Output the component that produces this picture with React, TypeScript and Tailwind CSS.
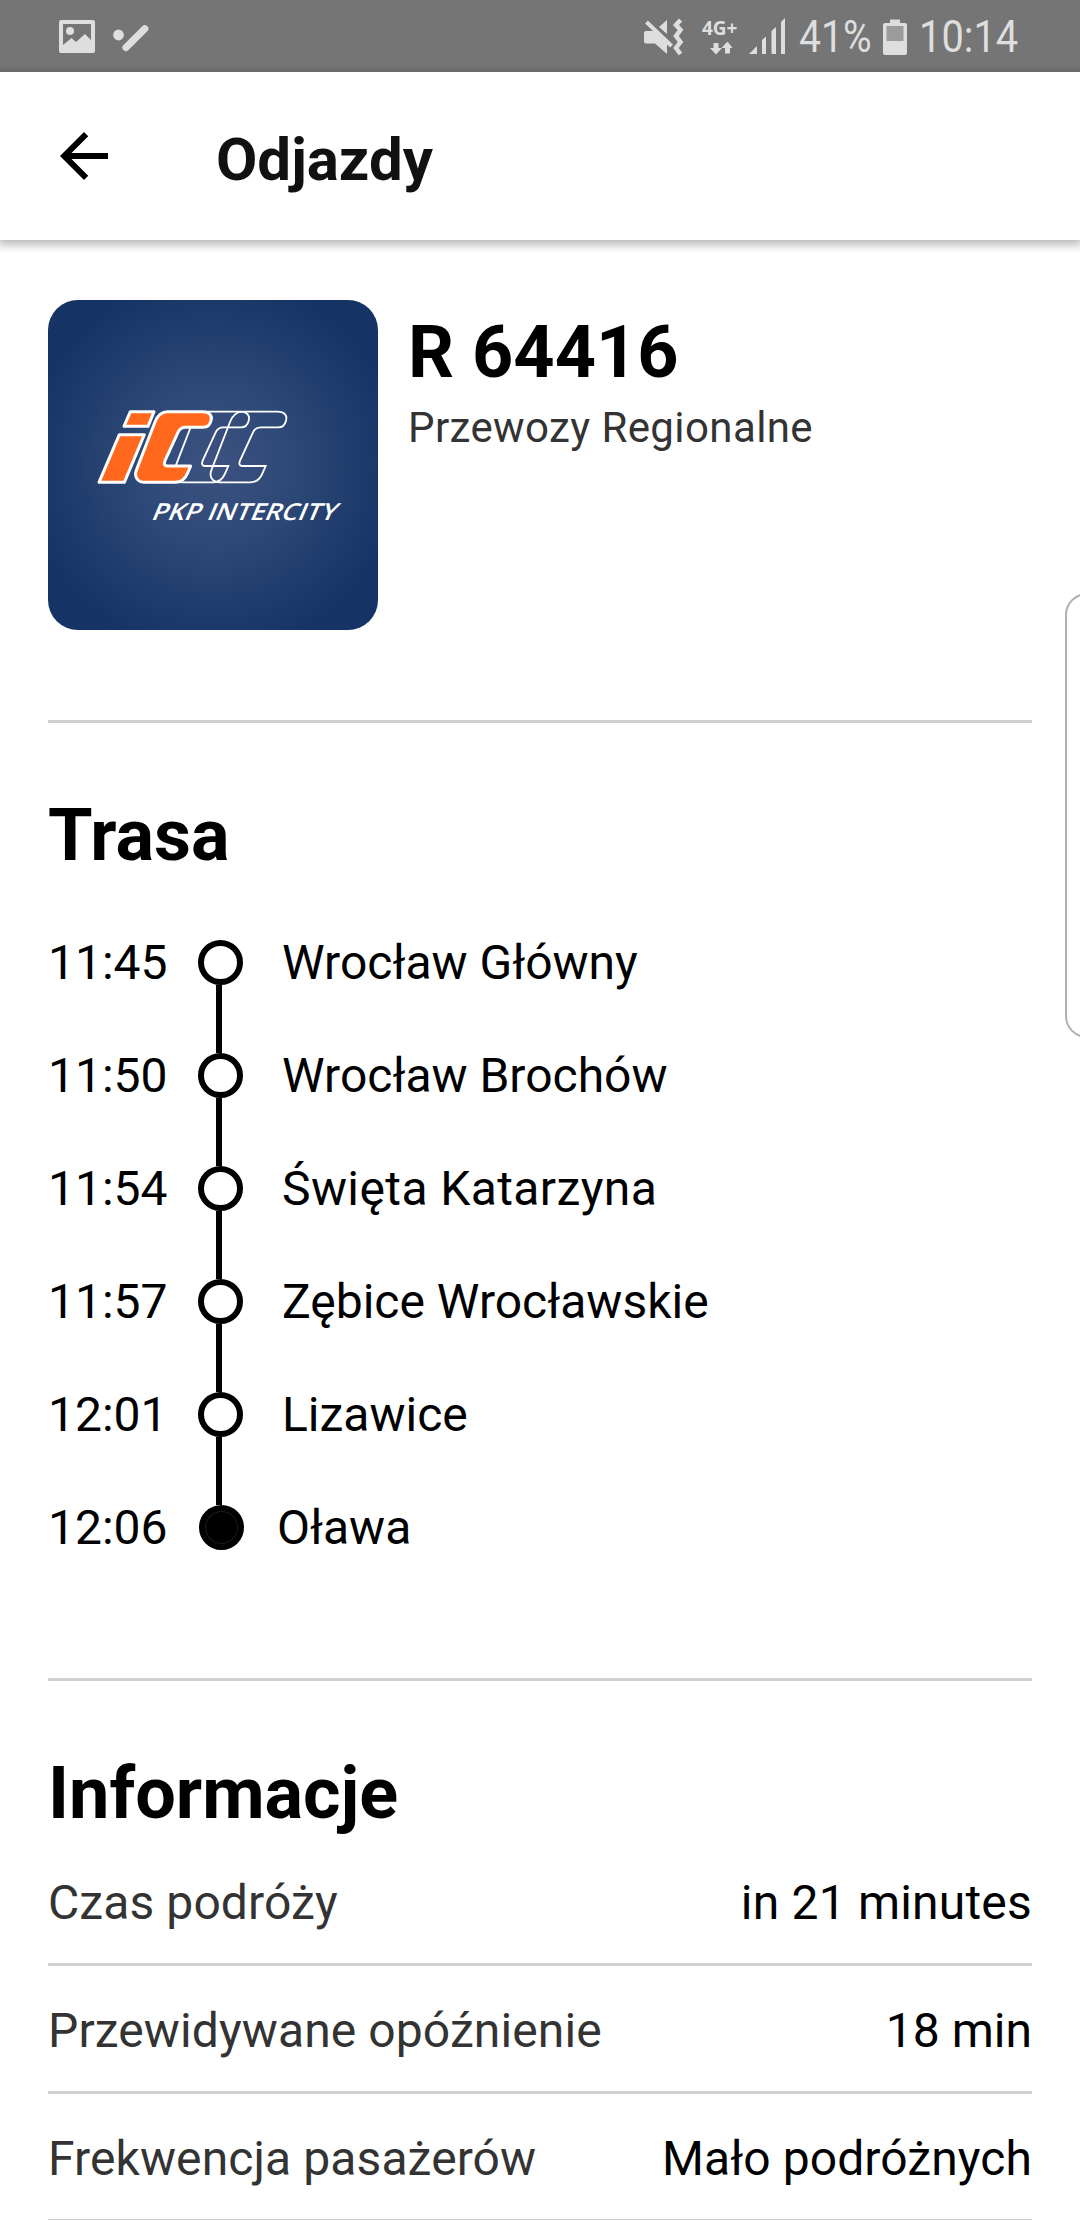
import React from "react";

const stops = [
  { time: "11:45", name: "Wrocław Główny", tracking: "" },
  { time: "11:50", name: "Wrocław Brochów", tracking: "" },
  { time: "11:54", name: "Święta Katarzyna", tracking: "tracking-[0.4px]" },
  { time: "11:57", name: "Zębice Wrocławskie", tracking: "" },
  { time: "12:01", name: "Lizawice", tracking: "" },
  { time: "12:06", name: "Oława", tracking: "" },
];

const info = [
  { label: "Czas podróży", value: "in 21 minutes", tracking: "tracking-[0.2px]" },
  { label: "Przewidywane opóźnienie", value: "18 min", tracking: "" },
  { label: "Frekwencja pasażerów", value: "Mało podróżnych", tracking: "tracking-[0.08px]" },
];

const C_SHAPE =
  "M383 365H488C507 365 518 376 513 392Q508 412 490 412H437Q421 412 414 427L375 512Q369 528 382 528H452L442 551Q431 577 406 577H316C291 577 281 559 290 538L345 396Q357 365 383 365Z";

function StatusBar() {
  return (
    <div className="flex h-[72px] items-start bg-[#757575] text-[#dedede]">
      <svg className="ml-[58px] mt-[18px] h-9 w-[94px]" viewBox="58 18 94 36" fill="currentColor">
        <path
          fillRule="evenodd"
          d="M61 20H93a2 2 0 0 1 2 2V51a2 2 0 0 1-2 2H61a2 2 0 0 1-2-2V22a2 2 0 0 1 2-2ZM63 24V45L71.500 38L76 42L85 34L91 40V24Z"
        />
        <circle cx="70" cy="31" r="4" />
        <circle cx="118.500" cy="35" r="5.400" />
        <path d="M126 47.500L144.800 28.700" stroke="currentColor" strokeWidth="7.200" strokeLinecap="round" />
      </svg>
      <svg className="ml-[490px] mt-[18px] h-[38px] w-[42px]" viewBox="642 18 42 38" fill="currentColor">
        <path d="M644 33Q644 31 646 31H656L667 42V54L655 43.500H646Q644 43.500 644 41.500Z" />
        <path d="M659 27L667 20V34Z" />
        <path d="M646.500 22L671.500 46" stroke="currentColor" strokeWidth="4" />
        <path
          d="M680.500 20L676 25L680.500 30L676 36L680.500 42L676 48L680.500 54"
          fill="none"
          stroke="currentColor"
          strokeWidth="4.500"
        />
      </svg>
      <div className="ml-[18px] mt-[18px] w-[38px]">
        <div className="whitespace-nowrap font-['Open_Sans'] text-[19px] font-bold leading-5">4G+</div>
        <svg className="ml-2 mt-[4px] h-[13px] w-[22px]" viewBox="709 42 22 13" fill="currentColor">
          <path d="M712.500 43h5v5h3.500l-6 6.500l-6-6.500h3.500Z M724 53.500h5V48h2.500l-5-6.500l-6 6.500h3.500Z" />
        </svg>
      </div>
      <svg className="ml-[8px] mt-[17px] h-[38px] w-[38px]" viewBox="748 17 38 38" fill="currentColor">
        <path d="M749 54L757 46V54Z M762 40L766 36.500V54H762Z M771.500 31L776 27V54H771.500Z M781 22L785 18V54H781Z" />
      </svg>
      <div className="ml-[13px] mt-[10px] w-[83px]">
        <div className="origin-left scale-x-[0.87] whitespace-nowrap text-[45px] leading-[54px]">41%</div>
      </div>
      <svg className="mt-[18px] h-[38px] w-[26px]" viewBox="882 18 26 38" fill="currentColor">
        <path d="M890 19.500H900V23H905a2 2 0 0 1 2 2V53a2 2 0 0 1-2 2H885a2 2 0 0 1-2-2V25a2 2 0 0 1 2-2H890Z" />
        <path d="M886.500 26H903.500V41H886.500Z" fill="#9b9b9b" />
      </svg>
      <div className="ml-[11px] mt-[10px]">
        <div className="origin-left scale-x-[0.885] whitespace-nowrap text-[45px] leading-[54px]">10:14</div>
      </div>
    </div>
  );
}

function CarrierLogo() {
  return (
    <div className="h-[330px] w-[330px] shrink-0 overflow-hidden rounded-[30px]">
      <svg viewBox="24 30 990 990" className="h-full w-full">
        <defs>
          <radialGradient id="glow" cx="0.500" cy="0.500" r="0.580">
            <stop offset="0" stopColor="#3d5281" />
            <stop offset="0.400" stopColor="#2e4977" />
            <stop offset="0.750" stopColor="#1e3c6c" />
            <stop offset="1" stopColor="#153465" />
          </radialGradient>
        </defs>
        <rect x="24" y="30" width="990" height="990" fill="url(#glow)" />
        <g fill="none" stroke="#fff" strokeWidth="5.500">
          <path d={C_SHAPE} transform="translate(225 0)" />
          <path d={C_SHAPE} transform="translate(113 0)" />
        </g>
        <g fill="#ff681d" stroke="#fff" strokeWidth="9" strokeLinejoin="round">
          <path d={C_SHAPE} />
          <path d="M271 365H342L324 409H252Z" />
          <path d="M238 434H313L253 577H177Z" />
        </g>
        <text
          transform="translate(331 689) skewX(-23)"
          textLength="552"
          lengthAdjust="spacingAndGlyphs"
          fill="#fff"
          className="font-['Open_Sans'] text-[70px] font-semibold"
        >
          PKP INTERCITY
        </text>
      </svg>
    </div>
  );
}

function Divider() {
  return <div className="h-[3px] bg-[#d0d0d0]" />;
}

export default function App() {
  return (
    <div className="relative h-[2220px] w-[1080px] overflow-hidden bg-white font-['Roboto',sans-serif] text-black">
      <StatusBar />
      <header className="flex h-[168px] items-center bg-white shadow-[0_3px_9px_2px_rgba(0,0,0,0.28)]">
        <svg className="ml-12 h-[72px] w-[72px]" viewBox="0 0 24 24">
          <path d="M20 11H7.830l5.590-5.590L12 4l-8 8 8 8 1.410-1.410L7.830 13H20v-2z" />
        </svg>
        <h1 className="ml-24 mt-[7px] text-[60px] font-bold leading-[72px] text-[#111]">Odjazdy</h1>
      </header>
      <main className="px-12 pt-[60px]">
        <section className="flex h-[330px]">
          <CarrierLogo />
          <div className="ml-[30px] pt-[11px]">
            <h2 className="text-[72px] font-bold leading-[84px]">R 64416</h2>
            <p className="mt-[8px] text-[42px] leading-[50px] tracking-[0.4px] text-[#333]">Przewozy Regionalne</p>
          </div>
        </section>
        <div className="mt-[90px]">
          <Divider />
        </div>
        <h2 className="mt-[71px] text-[72px] font-bold leading-[84px]">Trasa</h2>
        <ul className="mt-[28px] text-[48px]">
          {stops.map((s, i) => {
            const last = i === stops.length - 1;
            return (
              <li key={s.time} className="flex h-[113px] items-center">
                <span className="w-[150px]">{s.time}</span>
                <span className="flex h-full w-[45px] flex-col items-center">
                  <span className={`mr-[3px] w-[6px] flex-1 ${i === 0 ? "" : "bg-black"}`} />
                  <span
                    className={`h-[45px] w-[45px] shrink-0 rounded-full border-[6px] border-black ${
                      last ? "translate-x-px bg-black shadow-[inset_0_0_0_1px_#1f1f1f]" : "bg-white"
                    }`}
                  />
                  <span className={`mr-[3px] w-[6px] flex-1 ${last ? "" : "bg-black"}`} />
                </span>
                <span className={`${last ? "ml-[34px]" : "ml-[39px]"} ${s.tracking}`}>{s.name}</span>
              </li>
            );
          })}
        </ul>
        <div className="mt-[94px]">
          <Divider />
        </div>
        <h2 className="mt-[71px] text-[72px] font-bold leading-[84px]">Informacje</h2>
        <dl className="mt-[2px] text-[48px]">
          {info.map((r) => (
            <div key={r.label}>
              <div className="flex h-[125px] items-center justify-between pt-1">
                <dt className="tracking-[0.1px] text-[#333]">{r.label}</dt>
                <dd className={r.tracking}>{r.value}</dd>
              </div>
              <Divider />
            </div>
          ))}
        </dl>
      </main>
      <div className="absolute left-[1065px] top-[593px] h-[445px] w-[60px] rounded-[22px] border-2 border-[#b0b0b0] bg-white" />
    </div>
  );
}
